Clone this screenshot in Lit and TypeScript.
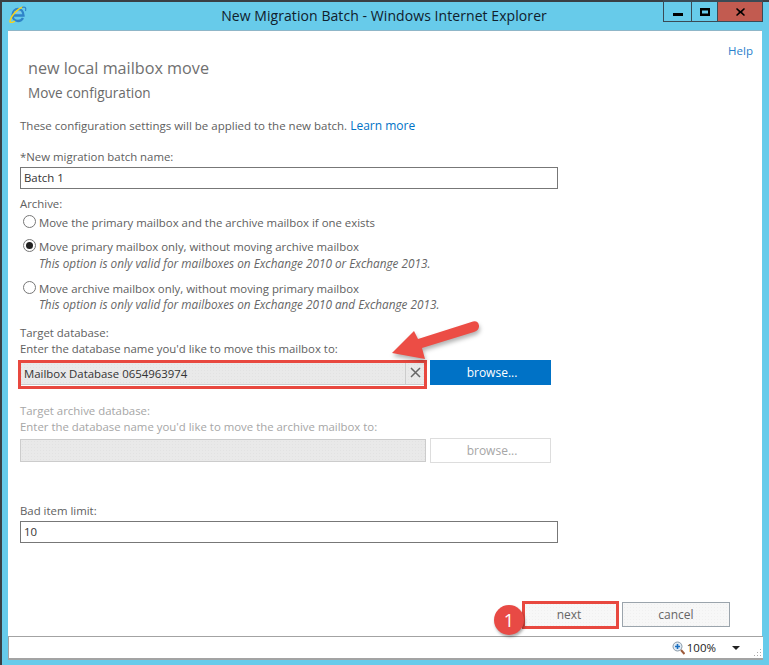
import { LitElement, html, css, svg } from "lit";
import { customElement } from "lit/decorators.js";

@customElement("app-root")
export class AppRoot extends LitElement {
  static styles = css`
    :host { display: block; width: 769px; height: 665px; position: relative; overflow: hidden;
      background: #67cbea; font-family: "Open Sans", "Noto Sans", sans-serif; font-size: 11.4px; color: #606060; line-height: 16px; }
    .frame { height: 665px; box-sizing: border-box; border-top: 2px solid #3a3f44; border-left: 2px solid #3a3f44; display: flex; flex-direction: column; padding: 0 7px 5px 6px; }
    .titlebar { height: 28px; flex: none; display: flex; position: relative; align-items: center; justify-content: center; }
    .title { font-size: 14px; color: #10202c; margin-left: -2px; margin-top: 0; letter-spacing: 0.07px; }
    .ie { position: absolute; left: 1px; top: 4px; }
    .winbtns { position: absolute; right: -1px; top: -2px; display: flex; height: 22px; box-sizing: border-box; border: 1px solid #3a4a55; border-top-width: 2px; }
    .wb { display: flex; align-items: center; justify-content: center; width: 27px; }
    .wb + .wb { border-left: 1px solid #3a4a55; }
    .wb.mid { width: 25px; }
    .wb.close { width: 44px; background: #c25b50; }
    .panel { flex: 1; background: #fff; border-top: 1px solid #8fb6c8; position: relative; padding: 0 0 0 12px; display: flex; flex-direction: column; min-height: 0; }
    .help { align-self: flex-end; margin: 12px 9px 0 0; color: #2a80cc; font-size: 11.5px; }
    h1 { margin: -3px 0 0 8px; font-weight: 400; font-size: 16.2px; line-height: 24px; color: #707070; }
    h2 { margin: 3px 0 0 8px; font-weight: 400; font-size: 13.55px; line-height: 20px; color: #6a6a6a; }
    .line { height: 16px; white-space: nowrap; }
    .intro { margin-top: 15px; font-size: 11.5px; }
    a { color: #0072c6; text-decoration: none; font-size: 12px; }
    .lbl { margin-top: 15px; }
    .input { box-sizing: border-box; width: 538px; height: 22px; border: 1px solid #777; padding: 0 3px; line-height: 20px; color: #333; margin-top: 2px; }
    .radio-row { display: flex; align-items: center; height: 16px; padding-left: 3px; gap: 3px; white-space: nowrap; }
    .radio { width: 13px; height: 13px; box-sizing: border-box; border: 1px solid #777; border-radius: 50%; background: #fff; display: flex; align-items: center; justify-content: center; flex: none; margin-top: -3px; }
    .radio i { width: 7px; height: 7px; background: #222; border-radius: 50%; }
    .note { font-style: italic; font-size: 11.77px; padding-left: 19px; height: 16px; white-space: nowrap; color: #666; }
    .r1 { margin-top: 3px; } .r2 { margin-top: 8px; } .r3 { margin-top: 10px; }
    .note.n3 { margin-top: -1px; }
    .picker { display: flex; gap: 4px; margin-top: 4px; align-items: flex-start; }
    .combo { box-sizing: border-box; width: 406px; height: 25px; display: flex; align-items: center; padding-right: 2px; color: #333;
      background-color: #e9e9e9; background-image: radial-gradient(#e2e2e2 0.6px, transparent 0.7px); background-size: 3px 3px; border-bottom: 1px solid #ccc; }
    .combo span { flex: 1; padding: 3px 0 0 4px; }
    .combo .x { flex: none; width: 19px; height: 100%; box-sizing: border-box; padding: 0; border-left: 1px solid #ccc; display: flex; align-items: center; justify-content: center; }
    .browse { width: 121px; height: 25px; box-sizing: border-box; background: #0072c6; color: #fff; display: flex; align-items: center; justify-content: center; font-size: 12px; padding: 1px 0 0 3px; }
    .disabled .line { color: #a6a6a6; }
    .disabled .combo { border: 1px solid #ccc; height: 23px; margin-top: 1px; }
    .disabled .browse { background: #fff; border: 1px solid #ddd; color: #a6a6a6; }
    .actions { position: absolute; right: 32px; top: 571px; display: flex; gap: 4px; }
    .btn { box-sizing: border-box; height: 25px; border: 1px solid #9ba4ac; display: flex; align-items: center; justify-content: center; font-size: 12px; color: #666;
      background-color: #f7f7f7; background-image: radial-gradient(#f0f0f0 0.6px, transparent 0.7px); background-size: 3px 3px; }
    .next { width: 94px; border-color: #aaa; padding-right: 4px; }
    .cancel { width: 108px; }
    .status { flex: none; height: 24px; box-sizing: border-box; background: #fff; border: 1px solid #a3a3a3; border-bottom-width: 2px; border-right: 0; display: flex; align-items: center; justify-content: flex-end; color: #222; font-size: 11.5px; padding-right: 5px; position: relative; margin-right: -1px; }
    .zoom { margin-right: 2px; }
    .caret { width: 0; height: 0; border: 4px solid transparent; border-top: 4px solid #222; border-bottom: 0; margin: 0 18px 0 16px; }
    .grip { position: absolute; right: 1px; bottom: 1px; }
    .redbox { position: absolute; border: 3px solid #e8483f; box-sizing: border-box; }
    .redbox.db { left: 18px; top: 360px; width: 409px; height: 29px; }
    .redbox.nx { left: 522px; top: 601px; width: 97px; height: 28px; }
    .overlay { position: absolute; left: 0; top: 0; pointer-events: none; }
    .arrow { filter: drop-shadow(1px 3px 2px rgba(0,0,0,.3)); }
    .badge { position: absolute; left: 494px; top: 605px; width: 30px; height: 30px; border-radius: 50%; background: #e84a45; color: #fff; display: flex; align-items: center; justify-content: center; font-size: 18px; box-shadow: 1px 2px 3px rgba(0,0,0,.35); }
  `;

  private ie() {
    return svg`<svg class="ie" width="18" height="17" viewBox="0 0 18 17">
      <path d="M4 9.500h10.500C14.500 5.500 12 3 9 3S3.500 5.500 3.500 9s2.500 6 5.500 6c2.200 0 4-1 5-3" fill="none" stroke="#2f83c8" stroke-width="2.300"/>
      <path d="M5 6.500h7" stroke="#8cc4e8" stroke-width="1.500"/>
      <path d="M1 15C2.500 8.500 9 2.500 14 1" fill="none" stroke="#f4d21f" stroke-width="1.500"/>
      <path d="M1 15C.5 17 3 17 6 15" fill="none" stroke="#f4d21f" stroke-width="1.400"/>
      <path d="M13 1.500c3-1 4.500 0 3.500 3.500" fill="none" stroke="#2f83c8" stroke-width="1.200"/>
    </svg>`;
  }

  render() {
    return html`
      <div class="frame">
        <div class="titlebar">
          ${this.ie()}
          <div class="title">New Migration Batch - Windows Internet Explorer</div>
          <div class="winbtns">
            <div class="wb"><svg width="10" height="8" viewBox="0 0 10 8"><rect y="5" width="10" height="3" fill="#000"/></svg></div>
            <div class="wb mid"><svg width="10" height="8" viewBox="0 0 10 8"><path d="M0 0h10v8H0zM2 2.500v3h6v-3z" fill="#000" fill-rule="evenodd"/></svg></div>
            <div class="wb close"><svg width="9" height="8" viewBox="0 0 9 8"><path d="M1 0l3.500 3L8 0l1 1-3 3 3 3-1 1-3.500-3L1 8 0 7l3-3-3-3z" fill="#000"/></svg></div>
          </div>
        </div>
        <div class="panel">
          <div class="help">Help</div>
          <h1>new local mailbox move</h1>
          <h2>Move configuration</h2>
          <div class="line intro">These configuration settings will be applied to the new batch. <a>Learn more</a></div>
          <div class="line lbl">*New migration batch name:</div>
          <div class="input">Batch 1</div>
          <div class="line" style="margin-top:7px">Archive:</div>
          <div class="radio-row r1"><span class="radio"></span>Move the primary mailbox and the archive mailbox if one exists</div>
          <div class="radio-row r2"><span class="radio"><i></i></span>Move primary mailbox only, without moving archive mailbox</div>
          <div class="note">This option is only valid for mailboxes on Exchange 2010 or Exchange 2013.</div>
          <div class="radio-row r3"><span class="radio"></span>Move archive mailbox only, without moving primary mailbox</div>
          <div class="note n3">This option is only valid for mailboxes on Exchange 2010 and Exchange 2013.</div>
          <div class="line" style="margin-top:13px">Target database:</div>
          <div class="line">Enter the database name you'd like to move this mailbox to:</div>
          <div class="picker" style="margin-top:3px">
            <div class="combo"><span>Mailbox Database 0654963974</span><span class="x"><svg width="11" height="11" viewBox="0 0 11 11"><path d="M1 1l9 9M10 1l-9 9" stroke="#666" stroke-width="1.500"/></svg></span></div>
            <div class="browse">browse...</div>
          </div>
          <div class="disabled">
            <div class="line" style="margin-top:18px">Target archive database:</div>
            <div class="line">Enter the database name you'd like to move the archive mailbox to:</div>
            <div class="picker" style="margin-top:3px"><div class="combo"></div><div class="browse">browse...</div></div>
          </div>
          <div class="line" style="margin-top:40px">Bad item limit:</div>
          <div class="input">10</div>
          <div class="actions">
            <div class="btn next">next</div>
            <div class="btn cancel">cancel</div>
          </div>
        </div>
        <div class="status">
          <svg class="zoom" width="13" height="14" viewBox="0 0 13 14"><circle cx="5.500" cy="5.500" r="4.500" fill="#dfeaf5" stroke="#8a9aa8"/><path d="M3 5.500h5M5.500 3v5" stroke="#1a6fc0" stroke-width="1.600"/><path d="M9 9l3.500 4" stroke="#9c5a3a" stroke-width="2"/></svg>
          <span>100%</span>
          <span class="caret"></span>
          <svg class="grip" width="9" height="9" viewBox="0 0 9 9" fill="#aaa"><rect x="7" y="1" width="1" height="1"/><rect x="4" y="4" width="1" height="1"/><rect x="7" y="4" width="1" height="1"/><rect x="1" y="7" width="1" height="1"/><rect x="4" y="7" width="1" height="1"/><rect x="7" y="7" width="1" height="1"/></svg>
        </div>
      </div>
      <div class="redbox db"></div>
      <div class="redbox nx"></div>
      <svg class="overlay" width="769" height="665" viewBox="0 0 769 665">
        <path class="arrow" d="M392 353L414 331L418 339L473 321.500Q478 320.500 479 325.500Q479.500 330 474 332L422 348L425 359Z" fill="#ec4d45"/>
      </svg>
      <div class="badge">1</div>
    `;
  }
}
